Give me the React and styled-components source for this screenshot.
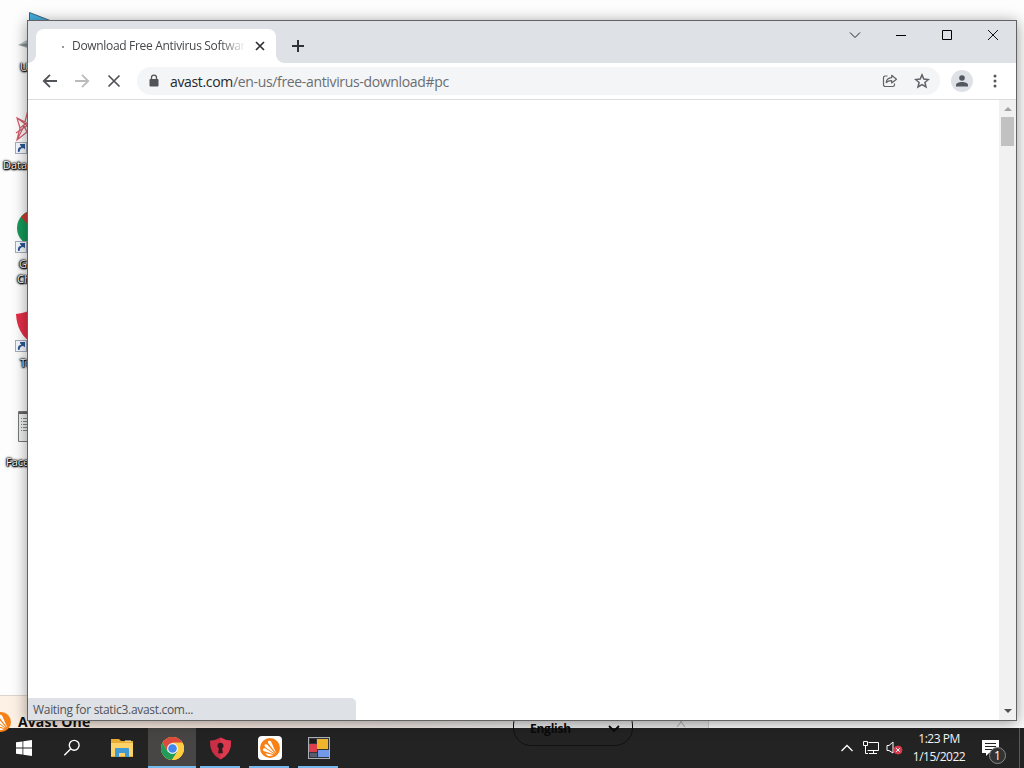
import React from "react";
import styled, { createGlobalStyle } from "styled-components";

const GlobalStyle = createGlobalStyle`
  * {
    box-sizing: border-box;
  }
  body {
    margin: 0;
    overflow: hidden;
    font-family: "Open Sans", "Noto Sans", sans-serif;
  }
  svg {
    display: block;
    flex: none;
  }
`;

const Desktop = styled.div`
  position: relative;
  width: 1024px;
  height: 768px;
  overflow: hidden;
  background: #fdfdfd;
  display: flex;
  flex-direction: column;
  justify-content: flex-end;
`;

/* desktop shortcuts */
const Shortcut = styled.div`
  position: absolute;
  left: ${(p) => p.$x || 0}px;
  top: ${(p) => p.$y}px;
`;
const ShortcutLabel = styled.div`
  position: absolute;
  left: ${(p) => p.$x}px;
  top: ${(p) => p.$y}px;
  font-size: 11px;
  line-height: 15px;
  white-space: pre;
  color: #fff;
  text-shadow: 0 0 1px #000, 0 0 1px #000, 0 0 2px #000, 1px 1px 1px #000, 0 1px 2px #000, 0 0 3px #000;
`;

/* popup hidden behind the browser */
const Popup = styled.div`
  position: absolute;
  left: 0;
  top: 695px;
  width: 709px;
  height: 33px;
  border-top: 1px solid #dfd4cb;
  border-right: 1px solid #cfcfcf;
  background: linear-gradient(90deg, #fdf1e5 0, #f9eae0 200px, #efe7e3 400px, #ececec 520px);
`;
const PopupTitle = styled.div`
  position: absolute;
  left: 18px;
  top: 17px;
  font: bold 14px/18px "Open Sans", sans-serif;
  letter-spacing: 0.1px;
  color: #111;
`;
const PopupLogo = styled.div`
  position: absolute;
  left: -9px;
  top: 16px;
`;
const LanguagePill = styled.div`
  position: absolute;
  left: 513px;
  top: 707px;
  width: 120px;
  height: 39px;
  padding: 4px 12px 0 16px;
  border: 1px solid #111;
  border-radius: 18px;
  display: flex;
  align-items: center;
  justify-content: space-between;
  font: bold 12px/16px "Open Sans", sans-serif;
  letter-spacing: -0.25px;
  color: #0a0a0a;
`;
const PopupClose = styled.div`
  position: absolute;
  left: 676px;
  top: 20px;
`;

/* browser window */
const Window = styled.div`
  position: absolute;
  left: 27px;
  top: 20px;
  width: 990px;
  height: 701px;
  border: 1px solid #636363;
  background: #fff;
  box-shadow: 0 2px 14px rgba(0, 0, 0, 0.4);
  display: flex;
  flex-direction: column;
`;
const TabStrip = styled.div`
  height: 42px;
  background: #dee1e6;
  display: flex;
  align-items: flex-start;
  padding-left: 8px;
`;
const Tab = styled.div`
  position: relative;
  width: 240px;
  height: 34px;
  margin-top: 8px;
  padding: 0 10px 0 24px;
  border-radius: 8px 8px 0 0;
  background: #fff;
  display: flex;
  align-items: center;
  &::before,
  &::after {
    content: "";
    position: absolute;
    bottom: 0;
    width: 8px;
    height: 8px;
  }
  &::before {
    left: -8px;
    background: radial-gradient(circle at 0 0, transparent 7.5px, #fff 8px);
  }
  &::after {
    right: -8px;
    background: radial-gradient(circle at 100% 0, transparent 7.5px, #fff 8px);
  }
`;
const Spinner = styled.i`
  width: 2px;
  height: 2px;
  margin: 2px 9px 0 2px;
  border-radius: 50%;
  background: #777;
`;
const TabTitle = styled.div`
  width: 172px;
  margin-left: -1px;
  overflow: hidden;
  white-space: nowrap;
  font-size: 12px;
  line-height: 16px;
  letter-spacing: -0.32px;
  color: #45474a;
  mask-image: linear-gradient(90deg, #000 148px, transparent 174px);
`;
const TabClose = styled.div`
  margin-left: auto;
`;
const NewTab = styled.div`
  margin: 18px 0 0 15px;
`;
const Captions = styled.div`
  margin-left: auto;
  display: flex;
`;
const CaptionButton = styled.div`
  width: 46px;
  height: 28px;
  display: flex;
  align-items: center;
  justify-content: center;
`;
const Toolbar = styled.div`
  height: 37px;
  border-bottom: 1px solid #dcdcdd;
  display: flex;
  align-items: center;
  padding: 0 12px 0 14px;
`;
const NavButton = styled.div`
  width: 16px;
  margin-right: 16px;
`;
const Omnibox = styled.div`
  width: 803px;
  height: 28px;
  margin-left: -1px;
  padding: 0 10px 0 12px;
  border-radius: 14px;
  background: #f4f5f6;
  display: flex;
  align-items: center;
`;
const Url = styled.div`
  margin-left: 11px;
  flex: 1;
  white-space: nowrap;
  font-size: 14px;
  letter-spacing: -0.34px;
  color: #6b6e72;
  b {
    font-weight: 400;
    color: #26282b;
  }
`;
const OmniActions = styled.div`
  display: flex;
  gap: 16px;
`;
const Avatar = styled.div`
  width: 22px;
  height: 22px;
  margin-left: 11px;
  border-radius: 50%;
  background: #dee1e6;
  display: flex;
  align-items: center;
  justify-content: center;
`;
const Dots = styled.div`
  margin-left: 19.5px;
`;
const Page = styled.div`
  flex: 1;
  display: flex;
  justify-content: space-between;
  align-items: stretch;
`;
const PageBody = styled.div`
  flex: 1;
  display: flex;
  align-items: flex-end;
`;
const Status = styled.div`
  width: 328px;
  height: 22px;
  padding-left: 5px;
  border-radius: 0 5px 0 0;
  background: #dee1e6;
  font-size: 12px;
  line-height: 23px;
  letter-spacing: -0.31px;
  color: #505357;
`;
const Scrollbar = styled.div`
  width: 17px;
  background: #f1f1f1;
  display: flex;
  flex-direction: column;
  align-items: center;
  padding: 7px 0 7px;
`;
const Thumb = styled.div`
  width: 13px;
  height: 29px;
  margin: 6px 0 auto;
  background: #c1c1c1;
`;
const Arrow = styled.i`
  width: 0;
  height: 0;
  border: 4px solid transparent;
  border-${(p) => (p.$up ? "bottom" : "top")}-color: ${(p) => (p.$up ? "#a3a3a3" : "#505050")};
  border-${(p) => (p.$up ? "top" : "bottom")}-width: 0;
`;

/* taskbar */
const Taskbar = styled.div`
  height: 40px;
  background: #242323;
  display: flex;
`;
const TaskButton = styled.div`
  position: relative;
  width: ${(p) => p.$w || 49}px;
  height: 40px;
  display: flex;
  align-items: center;
  justify-content: center;
  background: ${(p) => (p.$active ? "#474645" : "none")};
  &::after {
    content: "";
    position: absolute;
    left: ${(p) => (p.$active ? 0 : 4)}px;
    right: ${(p) => (p.$active ? 0 : 5)}px;
    bottom: 0;
    height: 2px;
    background: ${(p) => (p.$open ? "#76b9ed" : "none")};
  }
`;
const Tray = styled.div`
  margin-left: auto;
  width: 184px;
  display: flex;
  align-items: center;
`;
const TrayIcon = styled.div`
  margin-right: ${(p) => p.$gap || 0}px;
`;
const Clock = styled.div`
  width: 54px;
  text-align: center;
  white-space: nowrap;
  font-size: 12px;
  line-height: 18px;
  letter-spacing: -0.5px;
  color: #f4f4f4;
`;
const Notification = styled.div`
  position: relative;
  margin-left: 16px;
  span {
    position: absolute;
    left: 7px;
    top: 7px;
    width: 17px;
    height: 17px;
    border: 1px solid #8a8a8a;
    border-radius: 50%;
    background: #333;
    color: #fff;
    font-size: 12px;
    line-height: 15px;
    text-align: center;
  }
`;
const ShowDesktop = styled.div`
  align-self: stretch;
  margin-left: auto;
  width: 5px;
  border-left: 1px solid #5a5a5a;
`;

function LinkBadge() {
  return (
    <svg width="12" height="12" viewBox="0 0 12 12">
      <rect x=".5" y=".5" width="11" height="11" fill="#f5f8fc" stroke="#a4adba" />
      <path d="M3 10C2.5 6.5 4 5 6.3 4.8L5 3V2h5v5.2L8.3 6C6 6.3 4.7 7.2 4.7 9.8z" fill="#2c5795" />
    </svg>
  );
}

function ChromeLogo({ size }) {
  return (
    <svg width={size} height={size} viewBox="0 0 24 24">
      <circle cx="12" cy="12" r="12" fill="#ffcd41" />
      <path d="M12 12L6.8 15 1.6 6A12 12 0 0 1 22.4 6H12z" fill="#dd4b3e" />
      <path d="M1.6 6A12 12 0 0 0 11.4 24L17.2 15 6.8 15z" fill="#1f9d58" />
      <path d="M12 6h10.4A12 12 0 0 1 11.4 24l5.8-9z" fill="#ffcd41" />
      <circle cx="12" cy="12" r="5.7" fill="#f4f6f8" />
      <circle cx="12" cy="12" r="4.5" fill="#4386ee" />
    </svg>
  );
}

function AvastLogo({ plain }) {
  return (
    <svg width={plain ? 20 : 24} height={plain ? 20 : 24} viewBox={plain ? "2 2 20 20" : "0 0 24 24"}>
      {!plain && <rect width="24" height="24" rx="4" fill="#fff" />}
      <circle cx="12" cy="12" r="10" fill="#f78116" />
      <g fill="#fff">
        <path d="M10.2 5.2c1.2-.8 2.5-.4 3.1.8l5 11.6-7.6-9.8c-.8-1-.9-2-.5-2.6z" />
        <path d="M6.8 8.6c.9-.7 2-.5 2.9.4l7.7 9.1-9.7-6.6c-1.1-.8-1.5-2-.9-2.9z" />
        <path d="M5 13c.5-.9 1.5-1.1 2.6-.5l8.9 6-9.6-2.9C5.5 15.100 4.500 14.200 5 13z" />
        <path d="M7.500 17.200l7.800 1.900c-1.200.7-2.300 1-3.600 1-1.800 0-3.300-1.100-4.200-2.900z" />
      </g>
    </svg>
  );
}

function DesktopIcons() {
  return (
    <>
      <Shortcut $x={16} $y={11}>
        <svg width="40" height="45" viewBox="0 0 40 45">
          <path d="M13.5 1.500v9h23z" fill="#46aee0" stroke="#3d6474" />
          <path d="M2 34l9-5v8z" fill="#b8c0c5" />
          <path d="M3 34l9-2v4z" fill="#7f8c8e" />
        </svg>
      </Shortcut>
      <ShortcutLabel $x={20} $y={59}>U</ShortcutLabel>
      <Shortcut $x={15} $y={110}>
        <svg width="24" height="34" viewBox="0 0 24 34" fill="none" stroke="#d25b68" strokeWidth="1.200">
          <path d="M13 0L10 12 2 8l3 10L2 30l10-8M2 8l11 8M5 18l8-6M2 30l7-14 4 8M1 23l12-8" />
        </svg>
      </Shortcut>
      <Shortcut $x={15} $y={142}><LinkBadge /></Shortcut>
      <ShortcutLabel $x={3} $y={157}>Data</ShortcutLabel>
      <Shortcut $x={17} $y={210}>
        <svg width="34" height="36" viewBox="0 0 34 36">
          <circle cx="18" cy="18" r="18" fill="#169958" />
          <path d="M4 7A18 18 0 0 1 32 7L14 18z" fill="#ca3b36" />
        </svg>
      </Shortcut>
      <Shortcut $x={15} $y={241}><LinkBadge /></Shortcut>
      <ShortcutLabel $x={19} $y={256}>G</ShortcutLabel>
      <ShortcutLabel $x={17} $y={271}>Ch</ShortcutLabel>
      <Shortcut $x={16} $y={309}>
        <svg width="32" height="34" viewBox="0 0 32 34">
          <path d="M0 5Q10 4 16 0q6 4 16 5 0 20-16 29Q1 25 0 5z" fill="#e52e48" />
        </svg>
      </Shortcut>
      <Shortcut $x={15} $y={340}><LinkBadge /></Shortcut>
      <ShortcutLabel $x={20} $y={355}>To</ShortcutLabel>
      <Shortcut $x={18} $y={411}>
        <svg width="28" height="31" viewBox="0 0 28 31">
          <path d="M.5.5h27v30H.5z" fill="#eff0f0" stroke="#777" />
          <path d="M1 2h26" stroke="#666" strokeWidth="2" />
          <path d="M3 7.500h20M3 10.500h20M3 13.500h20M3 16.500h20M3 19.500h20" stroke="#858585" strokeDasharray="1 1 4 1" />
        </svg>
      </Shortcut>
      <ShortcutLabel $x={6} $y={454}>Face</ShortcutLabel>
    </>
  );
}

function Browser() {
  return (
    <Window>
      <TabStrip>
        <Tab>
          <Spinner />
          <TabTitle>Download Free Antivirus Software</TabTitle>
          <TabClose>
            <svg width="12" height="12" stroke="#2e3033" strokeWidth="1.7">
              <path d="M2 2l8 8M10 2l-8 8" />
            </svg>
          </TabClose>
        </Tab>
        <NewTab>
          <svg width="14" height="14" stroke="#303236" strokeWidth="2">
            <path d="M7 1v12M1 7h12" />
          </svg>
        </NewTab>
        <Captions>
          <CaptionButton>
            <svg width="12" height="8" fill="none" stroke="#222">
              <path d="M1 1.500l5 5 5-5" />
            </svg>
          </CaptionButton>
          <CaptionButton>
            <svg width="10" height="1"><rect width="10" height="1" fill="#000" /></svg>
          </CaptionButton>
          <CaptionButton>
            <svg width="10" height="10" fill="none" stroke="#000">
              <path d="M.5.5h9v9h-9z" />
            </svg>
          </CaptionButton>
          <CaptionButton>
            <svg width="10" height="10" stroke="#111">
              <path d="M0 0l10 10M10 0L0 10" />
            </svg>
          </CaptionButton>
        </Captions>
      </TabStrip>
      <Toolbar>
        <NavButton>
          <svg width="16" height="16" fill="none" stroke="#505357" strokeWidth="1.8">
            <path d="M15 8H2M8 1.800L1.800 8 8 14.200" />
          </svg>
        </NavButton>
        <NavButton>
          <svg width="16" height="16" fill="none" stroke="#b9bbbd" strokeWidth="1.8">
            <path d="M1 8h13M8 1.800L14.200 8 8 14.200" />
          </svg>
        </NavButton>
        <NavButton>
          <svg width="16" height="16" stroke="#505357" strokeWidth="1.7">
            <path d="M2.500 2.500l11 11M13.500 2.500l-11 11" />
          </svg>
        </NavButton>
        <Omnibox>
          <svg width="10" height="14" viewBox="0 0 10 14">
            <path d="M2.500 6V3.600a2.500 2.500 0 0 1 5 0V6" fill="none" stroke="#505357" strokeWidth="1.3" />
            <rect x=".5" y="5" width="9" height="7.5" rx="1" fill="#505357" />
          </svg>
          <Url><b>avast.com</b>/en-us/free-antivirus-download#pc</Url>
          <OmniActions>
            <svg width="16" height="16" fill="none" stroke="#606469" strokeWidth="1.2">
              <path d="M5.500 3H3.200A1.700 1.700 0 0 0 1.500 4.700v7.100a1.700 1.700 0 0 0 1.700 1.700h7.600a1.700 1.700 0 0 0 1.700-1.700V10.500" />
              <path d="M4.200 9.600C4.500 6.500 6.300 5 9.700 4.700V2.300L14.500 6.200 9.700 10V7.600C7.300 7.500 5.500 8.200 4.200 9.600z" strokeLinejoin="round" />
            </svg>
            <svg width="16" height="16" fill="none" stroke="#5f6368" strokeWidth="1.5">
              <path d="M8 1.900l1.800 4.200 4.600.4-3.500 3 1.100 4.500L8 11.600 4 14l1.100-4.500-3.500-3 4.600-.4z" />
            </svg>
          </OmniActions>
        </Omnibox>
        <Avatar>
          <svg width="12" height="12" fill="#53575f">
            <circle cx="6" cy="3" r="2.8" />
            <path d="M0 11.500V10c0-2 3-3 6-3s6 1 6 3v1.500z" />
          </svg>
        </Avatar>
        <Dots>
          <svg width="4" height="14" fill="#55585c">
            <circle cx="2" cy="2" r="1.500" />
            <circle cx="2" cy="7" r="1.500" />
            <circle cx="2" cy="12" r="1.500" />
          </svg>
        </Dots>
      </Toolbar>
      <Page>
        <PageBody>
          <Status>Waiting for static3.avast.com...</Status>
        </PageBody>
        <Scrollbar>
          <Arrow $up />
          <Thumb />
          <Arrow />
        </Scrollbar>
      </Page>
    </Window>
  );
}

export default function App() {
  return (
    <Desktop>
      <GlobalStyle />
      <DesktopIcons />
      <Popup>
        <PopupLogo><AvastLogo plain /></PopupLogo>
        <PopupTitle>Avast One</PopupTitle>
        <PopupClose>
          <svg width="10" height="12" stroke="#b5b5b5" strokeWidth="1.2">
            <path d="M1 1l8 10M9 1L1 11" />
          </svg>
        </PopupClose>
      </Popup>
      <Taskbar>
        <TaskButton $w={48}>
          <svg width="16" height="16" viewBox="0 0 16 16" fill="#fff">
            <path d="M0 2.300L6.500 1.400v6.200H0zM7.300 1.300L16 0v7.600H7.300zM0 8.400h6.500v6.200L0 13.700zM7.300 8.400H16V16l-8.700-1.200z" />
          </svg>
        </TaskButton>
        <TaskButton $w={48}>
          <svg width="18" height="18" fill="none" stroke="#fff" strokeWidth="1.4">
            <circle cx="11.2" cy="6.3" r="4.9" />
            <path d="M7.600 9.900L1.300 16.200" />
          </svg>
        </TaskButton>
        <TaskButton $w={52}>
          <svg width="22" height="20" viewBox="0 0 22 20">
            <path d="M0 1h8l2 2h12v16H0z" fill="#e8ad35" />
            <path d="M0 5h22v13H0z" fill="#fcd26a" />
            <path d="M4 11q0-1 1-1h12q1 0 1 1v8h-4v-4H8v4H4z" fill="#409bd5" />
            <path d="M14 3h6" stroke="#fff0b5" />
          </svg>
        </TaskButton>
        <TaskButton $w={48} $active $open><ChromeLogo size={23} /></TaskButton>
        <TaskButton $w={49} $open>
          <svg width="23" height="23" viewBox="0 0 24 24">
            <path d="M1 4Q7 3.500 12 .5 17 3.500 23 4q.5 14-11 19.500Q.5 18 1 4z" fill="#c92e45" />
            <path d="M12 .5Q17 3.500 23 4q.5 14-11 19.500z" fill="#df394f" />
            <path d="M12 6a3.300 3.300 0 0 1 1.700 6.100L14.500 17h-5l.8-4.900A3.300 3.300 0 0 1 12 6z" fill="#2b1b20" />
          </svg>
        </TaskButton>
        <TaskButton $w={49} $open><AvastLogo /></TaskButton>
        <TaskButton $w={49} $open>
          <svg width="22" height="22" viewBox="0 0 22 22">
            <rect x=".5" y=".5" width="21" height="21" fill="#34353a" stroke="#aab0b5" />
            <path d="M2 2h6v4H2z" fill="#1b1b1b" />
            <path d="M9 2h11v10H9z" fill="#efb62c" />
            <path d="M1 7h8v8H1z" fill="#dc3e4c" />
            <path d="M10 13h11v7H10z" fill="#7199e8" />
            <path d="M2 16h7v4H2z" fill="#555d6e" />
          </svg>
        </TaskButton>
        <Tray>
          <TrayIcon $gap={9}>
            <svg width="14" height="8" fill="none" stroke="#fff" strokeWidth="1.3">
              <path d="M1.500 7L7 1.500 12.500 7" />
            </svg>
          </TrayIcon>
          <TrayIcon $gap={7}>
            <svg width="16" height="14" fill="none" stroke="#fff">
              <path d="M5.500 1.500h10v8H4.500M.5.5h4v4h-4zM2.500 4.500v8H5M10.500 9.500v3M6 12.500h8" />
            </svg>
          </TrayIcon>
          <TrayIcon $gap={9}>
            <svg width="17" height="14" fill="none" stroke="#fff">
              <path d="M1 4.500h2L7 1v11L3 9.500H1z" />
              <circle cx="12" cy="9" r="4" fill="#d73a4b" stroke="#d73a4b" />
              <path d="M10.200 7.200l3.600 3.600M13.800 7.200l-3.600 3.600" />
            </svg>
          </TrayIcon>
          <Clock>
            1:23 PM
            <br />
            1/15/2022
          </Clock>
          <Notification>
            <svg width="17" height="16">
              <path d="M0 0h17v13H7l-3 3v-3H0z" fill="#fff" />
              <path d="M3 3.500h11M3 6.500h11M3 9.500h7" stroke="#242323" />
            </svg>
            <span>1</span>
          </Notification>
          <ShowDesktop />
        </Tray>
      </Taskbar>
      <LanguagePill>
        English
        <svg width="12" height="8" fill="none" stroke="#0a0a0a" strokeWidth="1.8">
          <path d="M1 1l5 5 5-5" />
        </svg>
      </LanguagePill>
      <Browser />
    </Desktop>
  );
}
